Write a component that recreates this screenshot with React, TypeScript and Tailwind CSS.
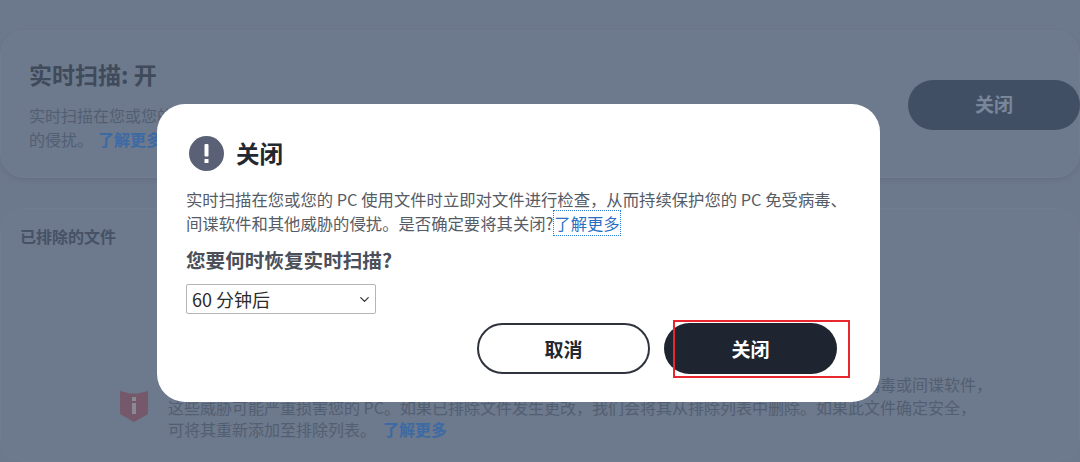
import { ChevronDown } from 'lucide-react'

const cjk = "font-['Noto_Sans_CJK_SC','Noto_Sans',sans-serif]"

function BackgroundPage() {
  return (
    <div className="flex h-[462px] w-[1080px] flex-col overflow-hidden bg-[#6c788b] pt-[30px]">
      <section className="flex h-[148px] shrink-0 items-start justify-between rounded-[24px] border border-[#707c8f] bg-[#6d798c] pl-[28px] shadow-[0_2px_4px_rgba(60,70,90,0.15)]">
        <div className="w-[860px]">
          <h2 className="mt-[27px] text-[23px] leading-[32px] font-bold text-[#3f4a5b]">实时扫描: 开</h2>
          <p className="mt-[14px] text-[16px] leading-[23.5px] text-[#525f72]">
            实时扫描在您或您的 PC 使用文件时立即对文件进行检查，从而持续保护您的 PC 免受病毒、间谍软件和其他威胁
            <br />
            的侵扰。
            <a className="ml-[5px] font-bold text-[#3c6aa5]">了解更多</a>
          </p>
        </div>
        <button className="mt-[49px] -mr-[1px] h-[50px] w-[172px] rounded-full bg-[#414f64] pb-[1px] text-[19px] font-bold text-[#79879a]" type="button">
          关闭
        </button>
      </section>
      <section className="mt-[30px] flex-1 rounded-[24px] border border-[#707c8f] bg-[#6d798c] pl-[19px]">
        <h3 className="mt-[15px] text-[16px] leading-[24px] font-bold text-[#465265]">已排除的文件</h3>
        <div className="mt-[125px] flex items-start gap-[20px] pl-[100px]">
          <svg className="mt-[17px] shrink-0" width="28" height="32" viewBox="0 0 28 32">
            <path d="M0 1 L10 3.5 L18 3.5 L28 1 V24 L14 32 L0 24 Z" fill="#75596a" />
            <rect x="12" y="7" width="4" height="4" fill="#8a8996" />
            <rect x="12" y="13" width="4" height="11" fill="#8a8996" />
          </svg>
          <p className="w-[824px] text-[16px] leading-[22.5px] text-[#525f72]">
            <span className="block text-right">实时扫描会持续检查您的文件，以防范病毒、间谍软件以及其他威胁，例如病毒或间谍软件，</span>
            这些威胁可能严重损害您的 PC。如果已排除文件发生更改，我们会将其从排除列表中删除。如果此文件确定安全，
            <br />
            可将其重新添加至排除列表。
            <a className="ml-[7px] font-bold text-[#3c6aa5]">了解更多</a>
          </p>
        </div>
      </section>
    </div>
  )
}

function CloseDialog() {
  return (
    <div className="absolute top-[104px] left-[157px] h-[298px] w-[723px] rounded-[28px] bg-white pt-[32px] pl-[29px]">
      <div className="flex items-center gap-[12px] pl-[3px]">
        <svg width="35" height="35" viewBox="0 0 35 35">
          <circle cx="17.5" cy="17.5" r="17.5" fill="#5a6176" />
          <rect x="15.5" y="8" width="4" height="12.5" rx="1" fill="#fff" />
          <rect x="15.5" y="23" width="4" height="4" rx="0.5" fill="#fff" />
        </svg>
        <h1 className="text-[23.5px] leading-[35px] font-bold text-[#23272f]">关闭</h1>
      </div>
      <p className="mt-[16px] text-[16.35px] leading-[24px] text-[#565c66]">
        实时扫描在您或您的 PC 使用文件时立即对文件进行检查，从而持续保护您的 PC 免受病毒、
        <br />
        间谍软件和其他威胁的侵扰。是否确定要将其关闭?
        <a className="ml-[1px] text-[#2a6fc4] outline-1 outline-[#2f7fd8] outline-dotted">了解更多</a>
      </p>
      <h2 className="mt-[12px] text-[19.6px] leading-[26px] font-bold text-[#4a4f59]">您要何时恢复实时扫描?</h2>
      <div className="mt-[11px] flex h-[30px] w-[190px] items-center justify-between rounded-[2px] border border-[#b5b5b5] pr-[3px] pl-[5px] text-[18px] text-[#2b2b2b]">
        <span>60 分钟后</span>
        <ChevronDown size={15} strokeWidth={2} className="text-[#333]" />
      </div>
      <div className="absolute top-[219px] left-[320px] flex gap-[14px]">
        <button className="h-[51px] w-[173px] rounded-full border-2 border-[#2f333b] pt-[2px] text-[19px] font-bold text-[#23272f]" type="button">
          取消
        </button>
        <button className="h-[51px] w-[173px] rounded-full bg-[#1f2530] pt-[2px] text-[19px] font-bold text-white" type="button">
          关闭
        </button>
        <div className="absolute top-[-3px] left-[196px] h-[58px] w-[177px] border-2 border-[#e8262d]" />
      </div>
    </div>
  )
}

export default function App() {
  return (
    <div className={`relative h-[462px] w-[1080px] overflow-hidden ${cjk}`}>
      <BackgroundPage />
      <CloseDialog />
    </div>
  )
}
